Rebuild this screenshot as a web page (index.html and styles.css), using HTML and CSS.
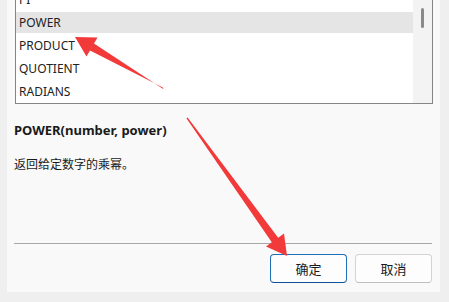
FILE: index.html
```html
<!DOCTYPE html>
<html lang="zh-CN">
<head>
    <meta charset="UTF-8">
    <title>插入函数</title>
    <link rel="stylesheet" href="styles.css">
</head>
<body>

    <div class="dialog">
        <div class="listbox">
            <div class="list-items">
                <div class="item">PI</div>
                <div class="item selected">POWER</div>
                <div class="item">PRODUCT</div>
                <div class="item">QUOTIENT</div>
                <div class="item">RADIANS</div>
            </div>
            <div class="scrollbar">
                <div class="thumb"></div>
            </div>
        </div>

        <div class="desc">
            <p class="syntax">POWER(number, power)</p>
            <p class="summary">返回给定数字的乘幂。</p>
        </div>

        <div class="buttons">
            <button class="btn primary">确定</button>
            <button class="btn">取消</button>
        </div>
    </div>

    <!-- annotation arrows -->
    <svg class="marks" width="449" height="302" viewBox="0 0 449 302">
        <polygon points="163.6,89.2 94,43.5 97.5,37.5 75,37 86.5,56.5 90,50.5 162.8,87.6" fill="#f23a3a"/>
        <polygon points="186.4,118.3 271.8,242.3 266,246.5 287,256 284,233.5 278.2,237.7 187.6,117.6" fill="#f23a3a"/>
    </svg>

</body>
</html>
```

FILE: styles.css
```css
body {
    margin: 0;
    background-color: #efefef;
    font-family: "Noto Sans", "Noto Sans CJK SC", sans-serif;
    color: #1a1a1a;
    position: relative;
    width: 449px;
    height: 302px;
    overflow: hidden;
}

.dialog {
    margin-left: 7px;
    width: 426px;
    height: 292px;
    padding-right: 7px;
    background-color: #f9f9f9;
    display: flex;
    flex-direction: column;
}

.listbox {
    margin-left: 8px;
    height: 103px;
    border: 1px solid #868686;
    border-top: none;
    background-color: #fff;
    display: flex;
    overflow: hidden;
}

.list-items {
    flex: 1;
    margin-top: -11px;
}

.item {
    height: 21px;
    line-height: 21px;
    margin-bottom: 2px;
    padding-left: 3px;
    font-size: 12px;
    color: #222;
}

.item.selected {
    background-color: #e5e5e5;
}

.scrollbar {
    width: 19px;
    background-color: #f3f3f3;
    display: flex;
    justify-content: center;
}

.thumb {
    width: 3px;
    height: 20px;
    margin-top: 8px;
    border-radius: 2px;
    background-color: #8a8a8a;
}

.desc {
    flex: 1;
    border-bottom: 1px solid #a8a8a8;
    margin-left: 7px;
    margin-right: 1px;
}

.desc p {
    margin: 0;
    line-height: 18px;
}

.syntax {
    margin-top: 17px !important;
    font-size: 13px;
    font-weight: bold;
}

.summary {
    margin-top: 17px !important;
    font-size: 12px;
}

.buttons {
    display: flex;
    justify-content: flex-end;
    gap: 8px;
    padding: 10px 1px 9px 0;
}

.btn {
    width: 77px;
    height: 29px;
    border: 1px solid #d3d3d3;
    border-bottom-color: #bdbdbd;
    border-radius: 4px;
    background-color: #fdfdfd;
    font-family: "Noto Sans CJK SC", sans-serif;
    font-size: 13px;
    color: #1a1a1a;
}

.btn.primary {
    border-color: #1e6fb8;
    border-bottom-color: #0c5296;
}

.marks {
    position: absolute;
    left: 0;
    top: 0;
}
```
